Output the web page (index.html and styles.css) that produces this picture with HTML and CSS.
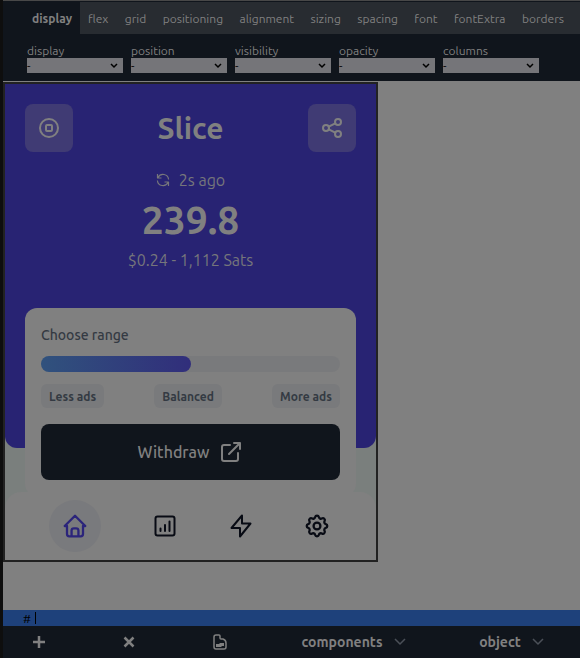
FILE: index.html
```html
<!DOCTYPE html>
<html lang="en">
<head>
<meta charset="utf-8">
<meta name="viewport" content="width=device-width, initial-scale=1">
<title>Slice</title>
<link rel="stylesheet" href="styles.css">
</head>
<body>
<div class="app">
  <header class="inspector">
    <nav class="tabs">
      <button class="tab tab-active" type="button">display</button>
      <div class="tab-list">
        <button class="tab" type="button">flex</button>
        <button class="tab" type="button">grid</button>
        <button class="tab" type="button">positioning</button>
        <button class="tab" type="button">alignment</button>
        <button class="tab" type="button">sizing</button>
        <button class="tab" type="button">spacing</button>
        <button class="tab" type="button">font</button>
        <button class="tab" type="button">fontExtra</button>
        <button class="tab" type="button">borders</button>
      </div>
    </nav>
    <div class="fields">
      <div class="field"><label for="f-display">display</label><div class="pick"><select id="f-display"><option>-</option></select><svg viewBox="0 0 8 6"><path d="M1 1l3 3 3-3"/></svg></div></div>
      <div class="field"><label for="f-position">position</label><div class="pick"><select id="f-position"><option>-</option></select><svg viewBox="0 0 8 6"><path d="M1 1l3 3 3-3"/></svg></div></div>
      <div class="field"><label for="f-visibility">visibility</label><div class="pick"><select id="f-visibility"><option>-</option></select><svg viewBox="0 0 8 6"><path d="M1 1l3 3 3-3"/></svg></div></div>
      <div class="field"><label for="f-opacity">opacity</label><div class="pick"><select id="f-opacity"><option>-</option></select><svg viewBox="0 0 8 6"><path d="M1 1l3 3 3-3"/></svg></div></div>
      <div class="field"><label for="f-columns">columns</label><div class="pick"><select id="f-columns"><option>-</option></select><svg viewBox="0 0 8 6"><path d="M1 1l3 3 3-3"/></svg></div></div>
    </div>
  </header>

  <main class="canvas">
    <div class="phone">
      <section class="hero">
        <div class="hero-top">
          <button class="square" type="button" aria-label="Stop"><svg class="icon" viewBox="0 0 24 24"><circle cx="12" cy="12" r="9"/><rect x="9" y="9" width="6" height="6" rx="1"/></svg></button>
          <h1>Slice</h1>
          <button class="square" type="button" aria-label="Share"><svg class="icon" viewBox="0 0 24 24"><circle cx="6" cy="12" r="3"/><circle cx="18" cy="6" r="3"/><circle cx="18" cy="18" r="3"/><path d="M8.7 10.7l6.6-3.4M8.7 13.3l6.6 3.4"/></svg></button>
        </div>
        <p class="updated"><svg class="refresh" viewBox="0 0 14 14"><path d="M1.500 1v4h4M12.500 13V9h-4M2 4.500a5.600 5.600 0 0 1 10.600 2M12 9.500a5.600 5.600 0 0 1-10.600-2"/></svg>2s ago</p>
        <p class="balance">239.8</p>
        <p class="detail">$0.24 - 1,112 Sats</p>
      </section>
      <section class="card">
        <h2>Choose range</h2>
        <div class="track"><div class="fill"></div></div>
        <div class="chips">
          <button type="button">Less ads</button>
          <button type="button">Balanced</button>
          <button type="button">More ads</button>
        </div>
        <button class="withdraw" type="button">Withdraw<svg class="icon" viewBox="0 0 24 24"><path d="M11 5H5a2 2 0 0 0-2 2v12a2 2 0 0 0 2 2h12a2 2 0 0 0 2-2v-6M10 14L20 4M15 3h6v6"/></svg></button>
      </section>
      <nav class="dock">
        <a class="home" href="#home" aria-label="Home"><svg class="icon" viewBox="1.5 1.5 21 21"><path d="M5 12H3l9-9 9 9h-2M5 12v7a2 2 0 0 0 2 2h10a2 2 0 0 0 2-2v-7M9 21v-5a2 2 0 0 1 2-2h2a2 2 0 0 1 2 2v5"/></svg></a>
        <a href="#stats" aria-label="Statistics"><svg class="icon" viewBox="0 0 24 24"><rect x="2.5" y="2.5" width="19" height="19" rx="2"/><path d="M7.500 14.500v2.500M12 11v6M16.500 7.500v9.500"/></svg></a>
        <a href="#activity" aria-label="Activity"><svg class="icon" viewBox="0 0 24 24"><path d="M13 9.500V1.500L2.500 14H11v8.500L21.500 9.500z"/></svg></a>
        <a href="#settings" aria-label="Settings"><svg class="icon" viewBox="1.5 1.5 21 21"><path d="M10.325 4.317c.426-1.756 2.924-1.756 3.350 0a1.724 1.724 0 0 0 2.573 1.066c1.543-.940 3.310.826 2.370 2.370a1.724 1.724 0 0 0 1.065 2.572c1.756.426 1.756 2.924 0 3.350a1.724 1.724 0 0 0-1.066 2.573c.940 1.543-.826 3.310-2.370 2.370a1.724 1.724 0 0 0-2.572 1.065c-.426 1.756-2.924 1.756-3.350 0a1.724 1.724 0 0 0-2.573-1.066c-1.543.940-3.310-.826-2.370-2.370a1.724 1.724 0 0 0-1.065-2.572c-1.756-.426-1.756-2.924 0-3.350a1.724 1.724 0 0 0 1.066-2.573c-.940-1.543.826-3.310 2.370-2.370 1 .608 2.296.070 2.572-1.065z"/><circle cx="12" cy="12" r="3"/></svg></a>
      </nav>
    </div>
  </main>

  <div class="command"><input type="text" value="#" aria-label="Command"><span class="caret"></span></div>
  <footer class="toolbar">
    <button type="button" aria-label="Add"><svg viewBox="0 0 14 14"><path d="M7 1v12M1 7h12"/></svg></button>
    <button class="remove" type="button" aria-label="Remove"><svg viewBox="0 0 14 14"><path d="M2.500 2.500l9 9M11.500 2.500l-9 9"/></svg></button>
    <button class="document" type="button" aria-label="File"><svg class="file" viewBox="0 0 14 16"><path d="M3 1h3q1 0 1 1v2q0 1 1 1h2q3 1 3 4v4q0 2-2 2H3q-2 0-2-2V3q0-2 2-2z"/><path class="solid" d="M3 10h3l1-1h4v3H9l-1 1H3z"/></svg></button>
    <button class="menu" type="button">components<svg class="chev" viewBox="0 0 12 8"><path d="M1 1l5 5 5-5"/></svg></button>
    <button class="menu menu-end" type="button">object<svg class="chev" viewBox="0 0 12 8"><path d="M1 1l5 5 5-5"/></svg></button>
  </footer>
</div>
</body>
</html>
```
FILE: styles.css
```css
* { box-sizing: border-box; }
body {
  margin: 0;
  background: #808080;
  color: #808080;
  font-family: Ubuntu, "Noto Sans", sans-serif;
  font-size: 12px;
}
h1, h2, p { margin: 0; }
button, select, input { font: inherit; color: inherit; border: 0; padding: 0; margin: 0; background: none; }
svg { display: block; fill: none; stroke: currentColor; stroke-width: 2; stroke-linecap: round; stroke-linejoin: round; }
.icon { width: 24px; height: 24px; }

.app { display: flex; flex-direction: column; min-height: 100vh; border-left: 3px solid #0e0e0e; }

.inspector { background: #10151c; border-top: 1px solid #484848; padding-top: 1px; }
.tabs { display: flex; height: 32px; line-height: 34px; }
.tab-active { width: 77px; padding-right: 8px; text-align: right; font-weight: 700; }
.tab-list { flex: 1; display: flex; justify-content: space-between; padding: 0 16px 0 8px; background: #282c31; }
.fields { display: flex; gap: 8px; padding: 8px 24px; height: 47px; }
.field { width: 96px; }
.field label { display: block; height: 16px; line-height: 18px; }
.pick { position: relative; height: 15px; }
.pick select { display: block; width: 100%; height: 15px; line-height: 15px; background: #757579; color: #000; appearance: none; border-radius: 0; }
.pick svg { position: absolute; right: 5px; top: 5px; width: 8px; height: 6px; color: #000; stroke-linecap: butt; stroke-linejoin: miter; stroke-width: 1.5; }

.canvas { flex: 1; padding-top: 1px; }
.phone { width: 375px; max-width: 100%; border: 2px solid #222; background: #7a7f7d; }
.hero { height: 364px; padding: 20px; background: #282373; border-radius: 0 0 12px 12px; text-align: center; }
.hero-top { display: flex; justify-content: space-between; align-items: center; }
.square { display: grid; place-items: center; width: 48px; height: 48px; border-radius: 8px; background: #403b74; }
h1 { font-size: 30px; line-height: 48px; font-weight: 700; }
.updated { display: flex; justify-content: center; align-items: center; gap: 9px; margin-top: 16px; font-size: 16px; line-height: 24px; }
.refresh { width: 14px; height: 14px; stroke-width: 1.2; stroke-linecap: butt; }
.balance { margin-top: 8px; font-size: 39px; line-height: 40px; font-weight: 700; }
.detail { margin-top: 8px; font-size: 16px; line-height: 24px; }
.updated, .detail { color: #76767b; }

.card { margin: -140px 20px 0; padding: 16px; background: #808080; border-radius: 12px; }
h2 { font-size: 14px; line-height: 20px; font-weight: 500; color: #343a43; margin-top: 1px; }
.track { height: 16px; margin-top: 11px; border-radius: 8px; background: #797a7c; }
.fill { width: 50%; height: 16px; border-radius: 8px; background: linear-gradient(90deg, #30527d, #312e7b); }
.chips { display: flex; justify-content: space-between; margin-top: 12px; }
.chips button { height: 24px; padding: 0 8px; border-radius: 6px; background: #797a7c; color: #343a43; font-size: 12px; font-weight: 700; }
.withdraw { display: flex; justify-content: center; align-items: center; gap: 10px; width: 100%; height: 56px; margin-top: 16px; border-radius: 8px; background: #10151c; font-size: 16px; font-weight: 500; }
.dock { position: relative; display: flex; justify-content: space-between; align-items: center; height: 68px; margin-top: -4px; padding: 0 47px 0 44px; background: #808080; border-radius: 16px 16px 0 0; }
.dock a { color: #080b14; }
.dock .home { display: grid; place-items: center; width: 52px; height: 52px; border-radius: 50%; background: #797a7d; color: #2b247b; }

.command { display: flex; align-items: center; height: 16px; padding-left: 20px; background: #1e417b; color: #000; }
.command input { width: 12px; height: 16px; }
.caret { width: 1px; height: 12px; background: #000; }
.toolbar { display: flex; align-items: center; height: 32px; padding-right: 7px; line-height: 34px; background: #10151c; }
.toolbar button { display: flex; justify-content: center; align-items: center; flex: 72 1 0; height: 32px; }
.toolbar .remove { flex-grow: 108; }
.toolbar .document { flex-grow: 74; }
.toolbar svg { width: 14px; height: 14px; stroke-linecap: butt; stroke-width: 2.5; }
.toolbar .file { height: 16px; stroke-width: 1.5; }
.toolbar .file .solid { fill: currentColor; stroke: none; }
.toolbar .menu { flex-grow: 193; gap: 11px; font-size: 14px; font-weight: 700; }
.toolbar .menu-end { flex-grow: 123; }
.toolbar .chev { width: 12px; height: 8px; color: #4b5058; stroke-width: 1.5; }
```
